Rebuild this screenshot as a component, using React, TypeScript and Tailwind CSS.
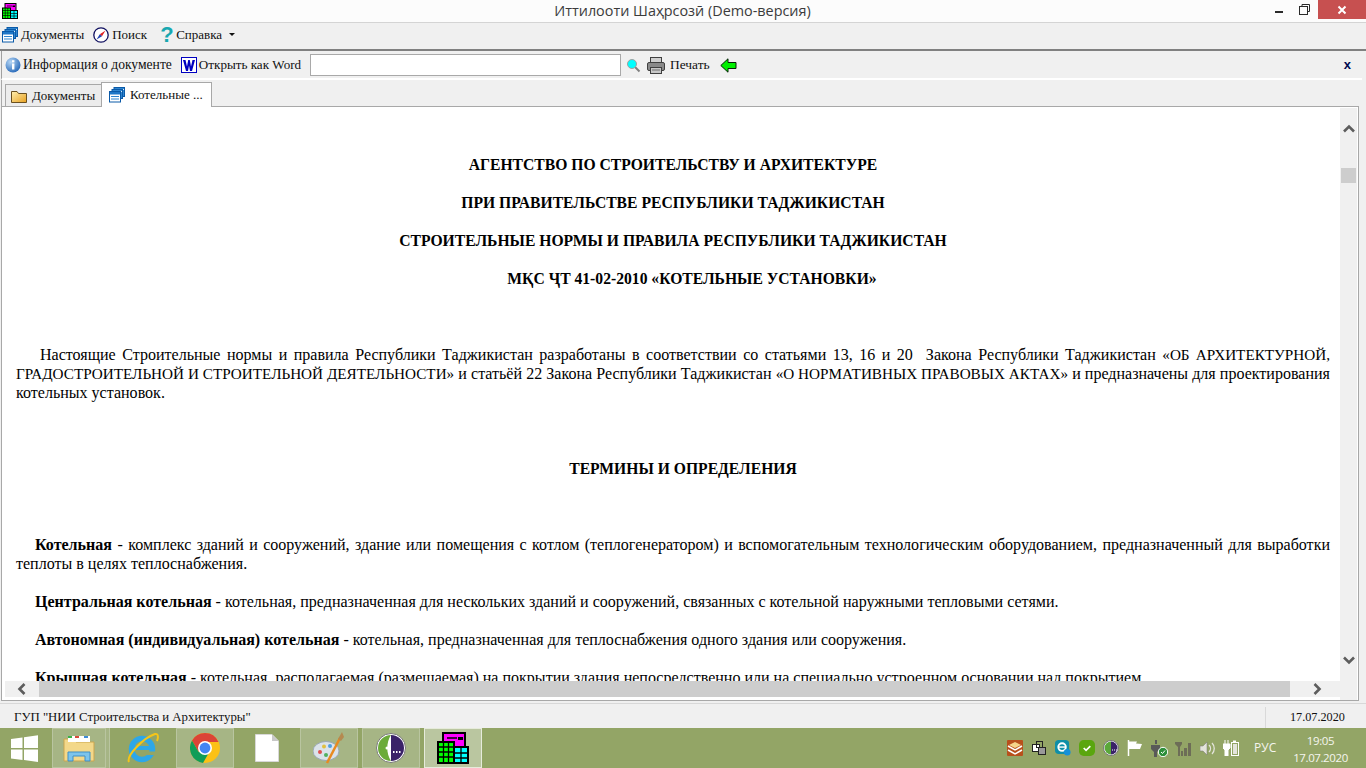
import React from "react";

function DocsIcon({ size = 16 }: { size?: number }) {
  return (
    <svg width={size} height={size} viewBox="0 0 16 16" className="shrink-0">
      <rect x="5" y="0.5" width="10.5" height="9" fill="#2f86d0" stroke="#0b5aa8" />
      <path d="M6 2.500h9" stroke="#dcecfa" />
      <rect x="3" y="2.500" width="10.500" height="9" fill="#2f86d0" stroke="#0b5aa8" />
      <path d="M4 4.500h9" stroke="#dcecfa" />
      <rect x="0.5" y="4.500" width="11" height="10.500" fill="#fff" stroke="#0b5aa8" />
      <rect x="1" y="5" width="10" height="2.500" fill="#1f78c8" />
      <path d="M2 9.500h8M2 12h8" stroke="#2f86d0" />
    </svg>
  );
}

function Compass() {
  return (
    <svg width="16" height="16" viewBox="0 0 16 16" className="shrink-0">
      <circle cx="8" cy="8" r="7.200" fill="#fff" stroke="#101060" strokeWidth="1.300" />
      <path d="M12.500 3.500 9 9.200 6.800 7.200Z" fill="#e02020" />
      <path d="M3.500 12.500 6.800 7.200 9 9.200Z" fill="#2040b0" />
    </svg>
  );
}

function BuildingLogo({ size = 16 }: { size?: number }) {
  return (
    <svg width={size} height={size} viewBox="0 0 32 32" className="shrink-0">
      <rect x="6" y="1" width="22" height="14" fill="#ff00ff" stroke="#000" strokeWidth="2" />
      <path d="M10 6h10" stroke="#000" strokeWidth="1.500" />
      <rect x="21" y="5" width="5" height="3" fill="#000" />
      <rect x="1" y="10" width="16" height="21" fill="#00ff00" stroke="#000" strokeWidth="2" />
      <path d="M1 15h16M1 20h16M1 25h16M6.500 10v21M11.500 10v21" stroke="#000" strokeWidth="1.300" />
      <rect x="17" y="15" width="14" height="16" fill="#00ffff" stroke="#000" strokeWidth="2" />
      <path d="M17 21h14M17 26h14M24 15v16" stroke="#000" strokeWidth="1.300" />
    </svg>
  );
}

function Chevron({ dir }: { dir: "up" | "down" | "left" | "right" }) {
  const d = {
    up: "M2 9.500 L7 4.500 L12 9.500",
    down: "M2 4.500 L7 9.500 L12 4.500",
    left: "M9.500 2 L4.500 7 L9.500 12",
    right: "M4.500 2 L9.500 7 L4.500 12",
  }[dir];
  return (
    <svg width="14" height="14" viewBox="0 0 14 14" className="shrink-0">
      <path d={d} fill="none" stroke="#5d5d5d" strokeWidth="2.600" />
    </svg>
  );
}

function Heading({ children, className = "" }: { children: React.ReactNode; className?: string }) {
  return <p className={`text-center font-bold text-[15.650px] ${className}`}>{children}</p>;
}

function Def({ term, children }: { term: string; children: React.ReactNode }) {
  return (
    <p className="text-justify indent-[19px] mb-[19px]">
      <b>{term}</b> - {children}
    </p>
  );
}

function Caps({ children }: { children: React.ReactNode }) {
  return <span className="text-[15.200px]">{children}</span>;
}

function TaskBtn({ children, boxed, active }: { children: React.ReactNode; boxed?: boolean; active?: boolean }) {
  const tone = active
    ? "bg-[#bac6a0] border border-[#e6ebdb]"
    : boxed
    ? "bg-[#a6b585] border border-[#b9c5a0]"
    : "";
  return <div className={`w-[58px] h-full mr-[4px] flex items-center justify-center ${tone}`}>{children}</div>;
}

function Tray({ children }: { children: React.ReactNode }) {
  return <div className="w-[24px] flex items-center justify-center">{children}</div>;
}

export default function App() {
  return (
    <div className="w-[1366px] h-[768px] overflow-hidden flex flex-col bg-[#f0f0f0] [font-family:'Liberation_Serif',serif] text-black">
      {/* Title bar */}
      <div className="h-[23px] shrink-0 bg-[#fcfcfc] border-b border-[#d4d4d4] flex items-center">
        <div className="ml-[2px]">
          <BuildingLogo size={16} />
        </div>
        <div className="flex-1 text-center text-[14.400px] leading-[22px] text-[#3b3b3b] pl-[81px] [font-family:'Open_Sans',sans-serif]">
          Иттилооти Шаҳрсозӣ (Demo-версия)
        </div>
        <div className="flex items-start h-[22px] self-start">
          <div className="w-[25px] h-[19px] flex items-center justify-center">
            <div className="w-[8px] h-[2px] bg-[#2a2a2a] mt-[5px]" />
          </div>
          <div className="w-[27px] h-[19px] flex items-center justify-center">
            <svg width="11" height="11" viewBox="0 0 11 11">
              <path d="M3 2.500V.5h7.500v7H8.500" fill="none" stroke="#2a2a2a" />
              <rect x=".5" y="2.500" width="8" height="8" fill="none" stroke="#2a2a2a" strokeWidth="1" />
            </svg>
          </div>
          <div className="w-[48px] h-[19px] bg-[#c75050] flex items-center justify-center">
            <svg width="10" height="10" viewBox="0 0 10 10">
              <path d="M1.500 1.500 8.500 8.500M8.500 1.500 1.500 8.500" stroke="#fff" strokeWidth="2" />
            </svg>
          </div>
        </div>
      </div>

      {/* Menu */}
      <div className="h-[26px] shrink-0 flex items-center pl-[2px] pb-[3px] text-[13px] text-[#111]">
        <DocsIcon />
        <span className="ml-[3px]">Документы</span>
        <span className="ml-[9px]"><Compass /></span>
        <span className="ml-[3px]">Поиск</span>
        <span className="ml-[13px] text-[22px] leading-none text-[#18a8b0] font-bold [font-family:'Liberation_Sans',sans-serif] w-[12px]">?</span>
        <span className="ml-[4px]">Справка</span>
        <span className="ml-[7px] w-0 h-0 border-x-[3px] border-x-transparent border-t-[3px] border-t-[#111]" />
      </div>

      {/* Frame */}
      <div className="flex-1 min-h-0 flex flex-col border-t-2 border-t-[#808080] pl-[1px]">
        {/* Toolbar */}
        <div className="h-[29px] shrink-0 flex items-center pl-[3px] pt-[1px] text-[13px] text-[#111] border-b-2 border-white border-l border-l-[#a0a0a0] mr-[4px]">
          <svg width="16" height="16" viewBox="0 0 16 16" className="shrink-0">
            <defs>
              <radialGradient id="ig" cx="35%" cy="30%" r="80%">
                <stop offset="0%" stopColor="#b5d6f5" />
                <stop offset="100%" stopColor="#1e62b5" />
              </radialGradient>
            </defs>
            <circle cx="8" cy="8" r="7.500" fill="url(#ig)" />
            <rect x="7" y="6.500" width="2.400" height="6" fill="#fff" />
            <rect x="7" y="3.200" width="2.400" height="2.200" fill="#fff" />
          </svg>
          <span className="ml-[2px] text-[13.600px]">Информация о документе</span>
          <svg width="16" height="16" viewBox="0 0 16 16" className="shrink-0 ml-[9px]">
            <rect x=".5" y=".5" width="15" height="15" fill="#fff" stroke="#0000c0" />
            <path d="M2 3 5 14h2L8 8.500 9 14h2l3-11h-2.500L10 9.500 8.800 3H7.200L6 9.500 4.500 3Z" fill="#0000c0" />
          </svg>
          <span className="ml-[2px] text-[13.100px]">Открыть как Word</span>
          <input className="ml-[9px] w-[311px] h-[22px] bg-white border border-[#a9a9a9] outline-none" />
          <svg width="15" height="15" viewBox="0 0 15 15" className="shrink-0 ml-[5px]">
            <path d="M9 9 13.500 13.500" stroke="#808080" strokeWidth="2" />
            <circle cx="6" cy="6" r="4.500" fill="#00ffff" stroke="#a0a0a0" />
          </svg>
          <svg width="18" height="17" viewBox="0 0 18 17" className="shrink-0 ml-[6px]">
            <rect x="3.500" y=".5" width="11" height="6" fill="#d0d0d0" stroke="#404040" />
            <rect x=".5" y="5.500" width="17" height="8" rx="1.500" fill="#8a8a8a" stroke="#404040" />
            <rect x="3.500" y="10.500" width="11" height="6" fill="#c8c8c8" stroke="#404040" />
            <path d="M5 13h8" stroke="#707070" />
          </svg>
          <span className="ml-[5px] text-[13.400px]">Печать</span>
          <svg width="17" height="15" viewBox="0 0 17 15" className="shrink-0 ml-[10px]">
            <path d="M.8 7.500 8 .8v3.700h8v6H8v3.700Z" fill="#00f000" stroke="#052005" />
          </svg>
          <span className="ml-auto mr-[11px] text-[13px] font-bold text-[#000a50] [font-family:'Liberation_Sans',sans-serif]">x</span>
        </div>

        {/* Tabs */}
        <div className="h-[27px] shrink-0 flex items-end pl-[3px] text-[13px] text-[#111] border-b border-l border-[#a8a8a8] mr-[7px]">
          <div className="w-[97px] h-[23px] -mb-px flex items-center pl-[5px] border border-[#a8a8a8] bg-[#ececec]">
            <svg width="16" height="14" viewBox="0 0 16 14" className="shrink-0">
              <defs>
                <linearGradient id="fg" x1="0" y1="0" x2="1" y2="1">
                  <stop offset="0%" stopColor="#fff0b0" />
                  <stop offset="100%" stopColor="#e8a020" />
                </linearGradient>
              </defs>
              <path d="M.5 2.500h5.500l1.500 2h8v9H.5Z" fill="url(#fg)" stroke="#6a5020" />
            </svg>
            <span className="ml-[5px]">Документы</span>
          </div>
          <div className="w-[111px] h-[25px] -mb-px flex items-center pl-[7px] border border-b-0 border-[#a8a8a8] bg-white relative -ml-px">
            <DocsIcon />
            <span className="ml-[5px]">Котельные ...</span>
          </div>
        </div>

        {/* Doc area */}
        <div className="flex-1 min-h-0 flex bg-white mr-[7px] mb-[2px] border-l border-r border-b border-[#a8a8a8]">
          <div className="flex-1 min-w-0 flex flex-col">
            <div className="flex-1 min-h-0 overflow-hidden pl-[14px] pr-[10px] pt-[48px] text-[16.050px] leading-[19px]">
              <Heading className="mb-[19px]">АГЕНТСТВО ПО СТРОИТЕЛЬСТВУ И АРХИТЕКТУРЕ</Heading>
              <Heading className="mb-[19px]">ПРИ ПРАВИТЕЛЬСТВЕ РЕСПУБЛИКИ ТАДЖИКИСТАН</Heading>
              <Heading className="mb-[19px]">СТРОИТЕЛЬНЫЕ НОРМЫ И ПРАВИЛА РЕСПУБЛИКИ ТАДЖИКИСТАН</Heading>
              <Heading className="pl-[38px] mb-[57px]">МҚС ҶТ 41-02-2010 «КОТЕЛЬНЫЕ УСТАНОВКИ»</Heading>
              <p className="text-justify indent-[24px] mb-[57px]">
                Настоящие Строительные нормы и правила Республики Таджикистан разработаны в соответствии со статьями 13, 16 и 20{"\u00a0"} Закона Республики Таджикистан <Caps>«ОБ АРХИТЕКТУРНОЙ, ГРАДОСТРОИТЕЛЬНОЙ И СТРОИТЕЛЬНОЙ ДЕЯТЕЛЬНОСТИ»</Caps> и статьёй 22 Закона Республики Таджикистан <Caps>«О НОРМАТИВНЫХ ПРАВОВЫХ АКТАХ»</Caps> и предназначены для проектирования котельных установок.
              </p>
              <Heading className="pl-[20px] mb-[57px]">ТЕРМИНЫ И ОПРЕДЕЛЕНИЯ</Heading>
              <Def term="Котельная">комплекс зданий и сооружений, здание или помещения с котлом (теплогенератором) и вспомогательным технологическим оборудованием, предназначенный для выработки теплоты в целях теплоснабжения.</Def>
              <Def term="Центральная котельная">котельная, предназначенная для нескольких зданий и сооружений, связанных с котельной наружными тепловыми сетями.</Def>
              <Def term="Автономная (индивидуальная) котельная">котельная, предназначенная для теплоснабжения одного здания или сооружения.</Def>
              <Def term="Крышная котельная">котельная, располагаемая (размещаемая) на покрытии здания непосредственно или на специально устроенном основании над покрытием.</Def>
            </div>
            {/* H scrollbar */}
            <div className="h-[16px] shrink-0 bg-[#f0f0f0] flex items-center ml-[3px]">
              <div className="w-[34px] flex justify-center"><Chevron dir="left" /></div>
              <div className="w-[1251px] h-[16px] bg-[#cdcdcd]" />
              <div className="flex-1 flex justify-center pl-[4px]"><Chevron dir="right" /></div>
            </div>
            <div className="h-[3px] shrink-0 bg-white" />
          </div>
          {/* V scrollbar */}
          <div className="w-[17px] shrink-0 bg-[#f0f0f0] flex flex-col items-center mt-[1px] mr-[1px]">
            <div className="pt-[14px]"><Chevron dir="up" /></div>
            <div className="w-[15px] h-[15px] bg-[#cdcdcd] mt-[32px]" />
            <div className="flex-1" />
            <div className="mb-[33px]"><Chevron dir="down" /></div>
          </div>
        </div>
      </div>

      {/* Status */}
      <div className="h-[25px] shrink-0 border-t border-[#d8d8d8] bg-[#f0f0f0] flex items-center text-[12.800px] text-[#111] pt-[3px]">
        <div className="pl-[14px] flex-1">ГУП "НИИ Строительства и Архитектуры"</div>
        <div className="w-[101px] h-full border-l border-[#d9d9d9] flex items-center pl-[24px] text-[12.200px]">17.07.2020</div>
      </div>

      {/* Taskbar */}
      <div className="h-[40px] shrink-0 bg-[#93a566] flex items-center">
        <div className="w-[52px] flex justify-start pl-[11px]">
          <svg width="27" height="27" viewBox="0 0 27 27">
            <path d="M0 4 11.500 2.400V13H0ZM13 2.200 27 .2V13H13ZM0 14.500H11.500V25L0 23.400ZM13 14.500H27V27L13 25Z" fill="#fff" />
          </svg>
        </div>
        <div className="w-[58px] h-full mr-[4px] flex">
          <div className="w-[54px] h-full bg-[#a6b585] border border-[#b9c5a0] flex items-center justify-center">
            <svg width="32" height="30" viewBox="0 0 32 30">
              <path d="M1 6h10l2 3h18v19H1Z" fill="#f3d88a" stroke="#c9a54e" />
              <rect x="5" y="3" width="22" height="6" fill="#fff" />
              <rect x="5" y="3" width="4" height="2" fill="#3bb34a" />
              <rect x="12" y="3" width="4" height="2" fill="#d9483b" />
              <rect x="21" y="3" width="4" height="2" fill="#3d8bd9" />
              <path d="M5 28V19h22v9h-5v-5H10v5Z" fill="#7cc4ec" stroke="#3e8fc5" />
            </svg>
          </div>
          <div className="w-[4px] h-full bg-[#a6b585] border-r border-[#b9c5a0]" />
        </div>
        <TaskBtn>
          <svg width="32" height="32" viewBox="0 0 32 32">
            <circle cx="15" cy="17" r="10.500" fill="none" stroke="#2da7e8" strokeWidth="5.500" />
            <path d="M6 16h19" stroke="#2da7e8" strokeWidth="4" />
            <rect x="19" y="19.500" width="12" height="3.500" fill="#93a566" />
            <path d="M2 30C-1 24 16 6 28 2c4-1 3 5 2 7" fill="none" stroke="#f5c518" strokeWidth="2" />
          </svg>
        </TaskBtn>
        <TaskBtn boxed>
          <svg width="30" height="30" viewBox="0 0 30 30">
            <circle cx="15" cy="15" r="15" fill="#fbc116" />
            <path d="M15 0A15 15 0 0 0 2 7.500L8.500 18.800 15 9H28.500A15 15 0 0 0 15 0Z" fill="#db4437" />
            <path d="M2 7.500A15 15 0 0 0 13 29.900L19.500 18.800H8.500Z" fill="#0f9d58" />
            <circle cx="15" cy="15" r="7" fill="#fff" />
            <circle cx="15" cy="15" r="5.400" fill="#4285f4" />
          </svg>
        </TaskBtn>
        <TaskBtn>
          <svg width="24" height="28" viewBox="0 0 24 28">
            <path d="M.5.500H17L23.500 7V27.500H.5Z" fill="#fff" stroke="#d8d8d8" />
            <path d="M17 .5V7H23.500" fill="#c8c8c8" />
          </svg>
        </TaskBtn>
        <TaskBtn boxed>
          <svg width="32" height="32" viewBox="0 0 32 32">
            <ellipse cx="13" cy="19" rx="13" ry="9.500" fill="#dbe3ea" stroke="#9aa8b5" />
            <circle cx="7" cy="20" r="2" fill="#e05050" />
            <circle cx="11" cy="14.500" r="2" fill="#e0c040" />
            <circle cx="17" cy="14" r="2" fill="#50a0e0" />
            <circle cx="13" cy="23" r="2" fill="#50b060" />
            <path d="M14 31 27 6" stroke="#e88a20" strokeWidth="2.500" />
            <path d="M25 7 29 0l2 5-3 4Z" fill="#b58a50" />
          </svg>
        </TaskBtn>
        <TaskBtn boxed>
          <svg width="30" height="30" viewBox="0 0 30 30">
            <circle cx="15" cy="15" r="14.500" fill="#fff" stroke="#777" />
            <path d="M15 2A13 13 0 0 0 15 28C10 20 10 10 15 2Z" fill="#6bab3a" />
            <path d="M15 2A13 13 0 0 1 15 28Z" fill="#3a2268" />
            <path d="M17 19h1.500M20 19h1.500M23 19h1.500" stroke="#fff" strokeWidth="2" />
            <circle cx="11" cy="15" r="1.500" fill="#fff" />
          </svg>
        </TaskBtn>
        <TaskBtn active><BuildingLogo size={32} /></TaskBtn>

        {/* Tray */}
        <div className="ml-auto flex items-center h-full">
          <Tray><svg width="16" height="16" viewBox="0 0 16 16"><rect width="16" height="16" rx="1" fill="#b8501c" /><path d="M1 6 8 10l7-4M1 10l7 4 7-4" fill="none" stroke="#fff" strokeWidth="1.500" /><path d="M2 5 8 2l6 3-6 3Z" fill="#f5d48a" /></svg></Tray>
          <Tray><svg width="14" height="14" viewBox="0 0 14 14"><rect x=".5" y="3.500" width="7" height="7" fill="#fff" stroke="#222" /><rect x="4.500" y=".5" width="6" height="6" fill="none" stroke="#222" /><rect x="6.500" y="6.500" width="7" height="7" fill="#999" stroke="#222" /></svg></Tray>
          <Tray><svg width="16" height="16" viewBox="0 0 17 17"><rect width="15" height="15" rx="4" fill="#0e8fa8" /><circle cx="7.500" cy="7.500" r="4" fill="none" stroke="#fff" strokeWidth="2" /><path d="M4 7.500h7" stroke="#fff" strokeWidth="1.500" /><circle cx="13" cy="13" r="3.500" fill="#1590d8" /></svg></Tray>
          <Tray><svg width="16" height="16" viewBox="0 0 17 17"><rect width="17" height="17" rx="5" fill="#5aa60e" /><path d="M5 8.500 7.500 11 12 6.500" fill="none" stroke="#fff" strokeWidth="1.800" /></svg></Tray>
          <Tray><svg width="16" height="16" viewBox="0 0 16 16"><circle cx="8" cy="8" r="7.500" fill="#fff" stroke="#777" /><path d="M8 1.500A6.500 6.500 0 0 0 8 14.500Z" fill="#5aa83a" /><path d="M8 1.500A6.500 6.500 0 0 1 8 14.500Z" fill="#3a2268" /><path d="M9 10h5" stroke="#fff" strokeDasharray="1 1" /></svg></Tray>
          <Tray><svg width="16" height="16" viewBox="0 0 16 16"><path d="M1.500 0V16" stroke="#fff" strokeWidth="1.500" /><path d="M2 1.500H10L9 3.500 15 4 13 9H2Z" fill="#fff" /></svg></Tray>
          <Tray><svg width="17" height="17" viewBox="0 0 17 17"><path d="M4 0h2v4H4ZM0 5h9v4L6 12v5H3v-5L0 9Z" fill="#595959" /><circle cx="12" cy="12" r="4.700" fill="#2d8f3a" stroke="#fff" /><path d="M10 12l1.500 1.500 2.500-3" fill="none" stroke="#fff" /></svg></Tray>
          <Tray><svg width="16" height="15" viewBox="0 0 16 15"><path d="M0 1h7v2L5 6v9H3V6L0 3ZM6 10h2v5H6ZM9 7h3v8H9ZM13 2h3v13h-3Z" fill="#6d6d57" /></svg></Tray>
          <Tray><svg width="15" height="15" viewBox="0 0 15 15"><path d="M0 5h3l4-4v13l-4-4H0Z" fill="#e4e4dc" stroke="#777" strokeWidth=".5" /><path d="M9 4c2 2 2 5 0 7M12 2c3 3 3 8 0 11" fill="none" stroke="#e4e4dc" strokeWidth="1.300" /></svg></Tray>
          <Tray><svg width="16" height="16" viewBox="0 0 16 16"><path d="M2 0v4M5 0v4M0 4h7v4l-2 2v6H2v-6L0 8Z" fill="#fff" stroke="#fff" /><rect x="8.500" y="2.500" width="7" height="13" fill="none" stroke="#fff" /><rect x="10" y="4" width="4" height="10" fill="#e4e4dc" /><rect x="10" y=".5" width="3" height="2" fill="#fff" /></svg></Tray>
          <span className="ml-[11px] w-[39px] text-[12px] text-[#f5f5ef] [font-family:'Open_Sans',sans-serif]">РУС</span>
          <div className="w-[55px] mr-[18px] pt-[1px] text-center text-[11.500px] tracking-[-0.4px] leading-[17px] whitespace-nowrap text-[#f5f5ef] [font-family:'Open_Sans',sans-serif]">
            <div>19:05</div>
            <div>17.07.2020</div>
          </div>
        </div>
      </div>
    </div>
  );
}
